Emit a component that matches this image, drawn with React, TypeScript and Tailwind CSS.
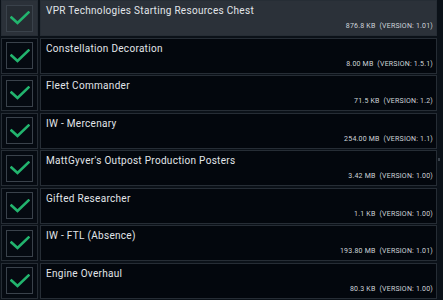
const mods = [
  { name: "VPR Technologies Starting Resources Chest", size: "876.8 KB", version: "1.01" },
  { name: "Constellation Decoration", size: "8.00 MB", version: "1.5.1" },
  { name: "Fleet Commander", size: "71.5 KB", version: "1.2" },
  { name: "IW - Mercenary", size: "254.00 MB", version: "1.1" },
  { name: "MattGyver's Outpost Production Posters", size: "3.42 MB", version: "1.00" },
  { name: "Gifted Researcher", size: "1.1 KB", version: "1.00" },
  { name: "IW - FTL (Absence)", size: "193.80 MB", version: "1.01" },
  { name: "Engine Overhaul", size: "80.3 KB", version: "1.00" },
];

const Check = () => (
  <svg width="20" height="14" viewBox="0 0 20 14" fill="none">
    <path d="M1.5 6.5 L7.5 12 L18.5 1.5" stroke="#22b46e" strokeWidth="2.6" strokeLinecap="square" />
  </svg>
);

const App = () => {
  return (
    <div
      className="w-[443px] h-[300px] overflow-hidden bg-[#0b1118] flex"
      style={{ fontFamily: "Roboto, 'Liberation Sans', sans-serif" }}
    >
      <div className="flex flex-col gap-[1.5px] pl-[1px] w-[437px]">
        {mods.map((m, i) => {
          const sel = i === 0;
          return (
            <div key={m.name} className="flex gap-[2px] h-[36px] shrink-0">
              <div
                className={`w-[37px] shrink-0 border border-[#262d35] flex items-center justify-center ${
                  sel ? "bg-[#2b3139]" : "bg-[#050a11]"
                }`}
              >
                <div
                  className={`w-[27px] h-[27px] border border-[#3a424b] flex items-center justify-center ${
                    sel ? "bg-[#262c33]" : "bg-[#050a11]"
                  }`}
                >
                  <Check />
                </div>
              </div>
              <div
                className={`flex-1 border border-[#262d35] flex flex-col justify-between pl-[5px] pr-[3px] pt-[3px] pb-[4px] ${
                  sel ? "bg-[#2b3139]" : "bg-[#03070d]"
                }`}
              >
                <div className="text-[10px] leading-[14px] text-[#e1e5e9] tracking-[0.3px]">{m.name}</div>
                <div className="self-end text-[7px] leading-[9px] text-[#cfd4d9] tracking-[0.2px] uppercase">
                  {m.size}&nbsp;&nbsp;(VERSION: {m.version})
                </div>
              </div>
            </div>
          );
        })}
      </div>
      <div className="flex-1 relative">
        <div className="absolute left-[1px] top-[158px] w-[2px] h-[3px] bg-[#3a424b]" />
      </div>
    </div>
  );
};

export default App;
